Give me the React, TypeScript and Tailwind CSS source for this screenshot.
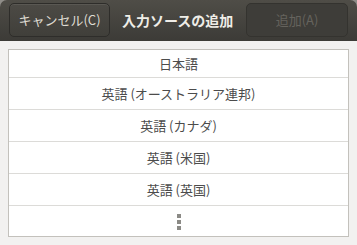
import React from "react";

const font = { fontFamily: '"Noto Sans CJK JP", "Noto Sans", sans-serif' };

export default function App() {
  const rows = [
    { t: "日本語", h: "h-[28px]" },
    { t: "英語 (オーストラリア連邦)", h: "h-[32px]" },
    { t: "英語 (カナダ)", h: "h-[32px]" },
    { t: "英語 (米国)", h: "h-[32px]" },
    { t: "英語 (英国)", h: "h-[32px]" },
  ];
  return (
    <div className="w-[357px] h-[245px] bg-[#8f8d88] flex flex-col" style={font}>
      <div className="h-[41px] shrink-0 rounded-t-[7px] bg-gradient-to-b from-[#4f4d47] to-[#3c3b37] flex items-center pl-[9px] pr-[9px] pb-[1px]">
        <button className="h-[34px] w-[101px] rounded-[5px] border border-[#2e2d2a] bg-gradient-to-b from-[#4c4a45] to-[#403f3a] text-[13px] text-[#dfdbd2] flex items-center justify-center shadow-[inset_0_1px_0_rgba(255,255,255,0.08)]">
          キャンセル(C)
        </button>
        <div className="ml-[12px] text-[14px] font-bold text-[#efede7] flex-1">入力ソースの追加</div>
        <button className="h-[34px] w-[102px] rounded-[5px] border border-[#34332f] bg-[#3e3d39] text-[13px] text-[#65635d] flex items-center justify-center">
          追加(A)
        </button>
      </div>
      <div className="flex-1 bg-[#f2f1f0] p-[8px]">
        <div className="bg-white border border-[#c3c1bc] flex flex-col">
          {rows.map((r) => (
            <div
              key={r.t}
              className={`${r.h} border-b border-[#dcdbd8] flex items-center justify-center text-[13px] text-[#4c4c4c]`}
            >
              {r.t}
            </div>
          ))}
          <div className="h-[30px] flex flex-col items-center justify-center gap-[2px] pt-[1px]">
            <div className="w-[4px] h-[4px] bg-[#8b8a86]" />
            <div className="w-[4px] h-[4px] bg-[#8b8a86]" />
            <div className="w-[4px] h-[4px] bg-[#8b8a86]" />
          </div>
        </div>
      </div>
    </div>
  );
}
